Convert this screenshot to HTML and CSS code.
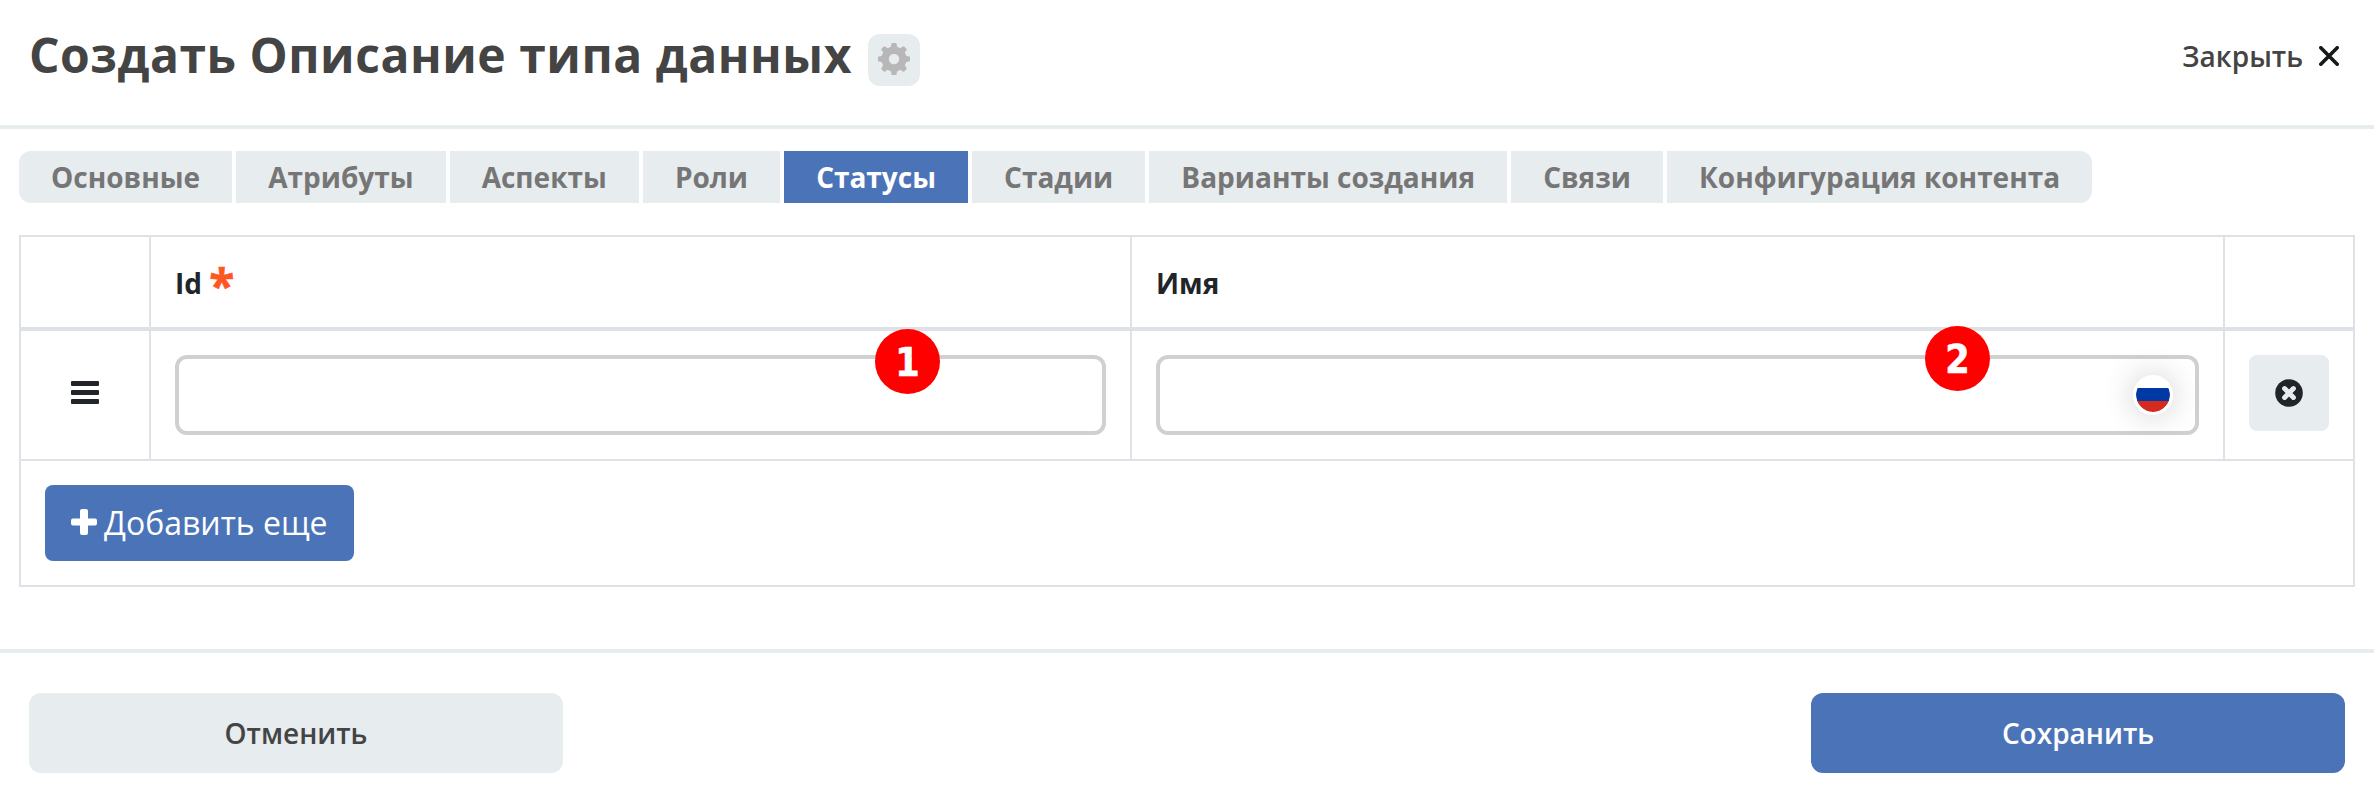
FILE: index.html
```html
<!DOCTYPE html>
<html lang="ru">
<head>
<meta charset="utf-8">
<title>Создать Описание типа данных</title>
<link rel="stylesheet" href="styles.css">
</head>
<body>
<header class="header">
  <h1 class="title">Создать Описание типа данных</h1>
  <button class="settings" aria-label="Настройки">
    <svg viewBox="-16 -16 32 32" width="32" height="32"><g fill="#b7b7b7"><circle r="12.200"/><g id="teeth"><path id="tooth" d="M-5 -11L-3 -12.500L-2.600 -15.200Q-2.400 -16 -1.600 -16H1.600Q2.400 -16 2.600 -15.200L3 -12.500L5 -11z"/><use href="#tooth" transform="rotate(45)"/><use href="#tooth" transform="rotate(90)"/><use href="#tooth" transform="rotate(135)"/></g><use href="#teeth" transform="rotate(180)"/></g><circle r="5.200" fill="#e7ecef"/></svg>
  </button>
  <button class="close">Закрыть
    <svg viewBox="0 0 20 20" width="20" height="20"><path d="M1.800 1.800l16.400 16.400M18.200 1.800L1.800 18.200" stroke="#171819" stroke-width="3.600" stroke-linecap="round"/></svg>
  </button>
</header>
<main class="content">
  <nav class="tabs">
    <a class="tab">Основные</a>
    <a class="tab">Атрибуты</a>
    <a class="tab">Аспекты</a>
    <a class="tab">Роли</a>
    <a class="tab tab-active">Статусы</a>
    <a class="tab">Стадии</a>
    <a class="tab">Варианты создания</a>
    <a class="tab">Связи</a>
    <a class="tab">Конфигурация контента</a>
  </nav>
  <section class="grid">
    <div class="row row-head">
      <div class="cell"></div>
      <div class="cell">Id <span class="required">*</span></div>
      <div class="cell">Имя</div>
      <div class="cell"></div>
    </div>
    <div class="row row-item">
      <div class="cell cell-drag">
        <svg viewBox="0 0 28 24" width="28" height="24"><path fill="#212529" d="M1 0h26a1 1 0 0 1 1 1v3a1 1 0 0 1-1 1H1a1 1 0 0 1-1-1V1a1 1 0 0 1 1-1zM1 9h26a1 1 0 0 1 1 1v3a1 1 0 0 1-1 1H1a1 1 0 0 1-1-1v-3a1 1 0 0 1 1-1zM1 18h26a1 1 0 0 1 1 1v3a1 1 0 0 1-1 1H1a1 1 0 0 1-1-1v-3a1 1 0 0 1 1-1z"/></svg>
      </div>
      <div class="cell">
        <div class="field"></div>
        <span class="badge badge-one">1</span>
      </div>
      <div class="cell">
        <div class="field field-lang"><span class="flag"></span></div>
        <span class="badge badge-two">2</span>
      </div>
      <div class="cell">
        <button class="remove" aria-label="Удалить">
          <svg viewBox="0 0 28 28" width="28" height="28"><circle cx="14" cy="14" r="13.800" fill="#212529"/><path d="M9.600 9.600l8.800 8.800M18.400 9.600l-8.800 8.800" stroke="#e7ecef" stroke-width="5" stroke-linecap="round"/></svg>
        </button>
      </div>
    </div>
    <div class="row-add">
      <button class="add">
        <svg viewBox="0 0 26 26" width="26" height="26"><path fill="#fff" d="M11 0h4a2 2 0 0 1 2 2v7.500h7a2 2 0 0 1 2 2v3a2 2 0 0 1-2 2h-7V24a2 2 0 0 1-2 2h-4a2 2 0 0 1-2-2v-7.500H2a2 2 0 0 1-2-2v-3a2 2 0 0 1 2-2h7V2a2 2 0 0 1 2-2z"/></svg>
        <span>Добавить еще</span>
      </button>
    </div>
  </section>
</main>
<footer class="footer">
  <button class="btn">Отменить</button>
  <button class="btn btn-primary">Сохранить</button>
</footer>
</body>
</html>
```
FILE: styles.css
```css
* { box-sizing: border-box; }
body {
  margin: 0;
  height: 808px;
  display: flex;
  flex-direction: column;
  background: #fff;
  color: #444;
  font-family: "Open Sans", sans-serif;
  font-size: 28px;
  overflow: hidden;
}
button {
  font: inherit;
  color: inherit;
  border: 0;
  padding: 0;
  background: none;
}
svg { display: block; fill: none; }
.header {
  display: flex;
  height: 129px;
  padding: 0 35px 0 29px;
  border-bottom: 4px solid #e7ecef;
}
.title {
  margin: 22px 0 0;
  font-size: 48px;
  line-height: 66px;
  font-weight: 700;
  letter-spacing: .53px;
  white-space: nowrap;
}
.settings {
  display: flex;
  align-items: center;
  justify-content: center;
  width: 52px;
  height: 52px;
  padding-bottom: 3px;
  margin: 34px 0 0 16px;
  border-radius: 12px;
  background: #e7ecef;
}
.close {
  display: flex;
  align-items: center;
  gap: 16px;
  height: 38px;
  margin: 37px 0 0 auto;
  font-weight: 600;
  line-height: 36px;
}
.content { padding: 22px 19px 0; }
.tabs {
  display: flex;
  gap: 4px;
  height: 52px;
}
.tab {
  padding: 0 32.05px;
  line-height: 53px;
  font-weight: 700;
  color: #767676;
  background: #e7ecef;
  white-space: nowrap;
}
.tab:first-child { border-radius: 12px 0 0 12px; }
.tab:last-child { border-radius: 0 12px 12px 0; }
.tab-active { color: #fff; background: #4b74b8; }
.grid {
  margin-top: 32px;
  border: 2px solid #dee2e6;
  color: #212529;
}
.row {
  display: grid;
  grid-template-columns: 130px 981px 1093px 128px;
}
.cell {
  position: relative;
  padding: 24px;
  border-right: 2px solid #dee2e6;
}
.cell:last-child { border-right: 0; }
.row-head {
  height: 94px;
  border-bottom: 4px solid #dee2e6;
  font-weight: 700;
}
.row-head .cell { padding: 0 24px; line-height: 92px; }
.required {
  color: #ff5722;
  font-size: 46px;
  line-height: 1;
  font-weight: 700;
  vertical-align: -9px;
  -webkit-text-stroke: .6px #ff5722;
}
.row-item { height: 130px; border-bottom: 2px solid #dee2e6; }
.cell-drag { padding: 50px 0 0 50px; }
.field {
  height: 80px;
  border: 4px solid #d0d0d0;
  border-radius: 12px;
}
.field-lang {
  display: flex;
  justify-content: flex-end;
  padding: 16px 22px;
}
.flag {
  width: 40px;
  height: 40px;
  border: 3px solid #fff;
  border-radius: 50%;
  background: linear-gradient(#fff 30%, #0039a6 30%, #0039a6 68%, #d52b1e 68%) padding-box, #fff;
  box-shadow: 0 0 32px rgba(0, 0, 0, .2);
}
.badge {
  position: absolute;
  width: 65px;
  height: 65px;
  border-radius: 50%;
  background: #f00;
  color: #fff;
  font: 700 39px/67px "DejaVu Sans Condensed", "DejaVu Sans", sans-serif;
  text-align: center;
  -webkit-text-stroke: .6px #fff;
}
.badge-one { left: 724px; top: -2px; }
.badge-two { left: 793px; top: -5px; }
.remove {
  display: flex;
  align-items: center;
  justify-content: center;
  width: 80px;
  height: 76px;
  border-radius: 8px;
  background: #e7ecef;
}
.row-add { height: 124px; padding: 24px; }
.add {
  display: flex;
  align-items: center;
  gap: 7px;
  width: 309px;
  height: 76px;
  padding-left: 26px;
  border-radius: 8px;
  background: #4b74b8;
  color: #fff;
  font-size: 32px;
  line-height: 42px;
  white-space: nowrap;
}
.add svg { margin-top: -2px; }
.footer {
  display: flex;
  justify-content: space-between;
  margin-top: 62px;
  padding: 40px 29px 0;
  border-top: 4px solid #e7ecef;
}
.btn {
  width: 534px;
  height: 80px;
  border-radius: 12px;
  background: #e7ecef;
  font-weight: 600;
}
.btn-primary { background: #4b74b8; color: #fff; }
```
